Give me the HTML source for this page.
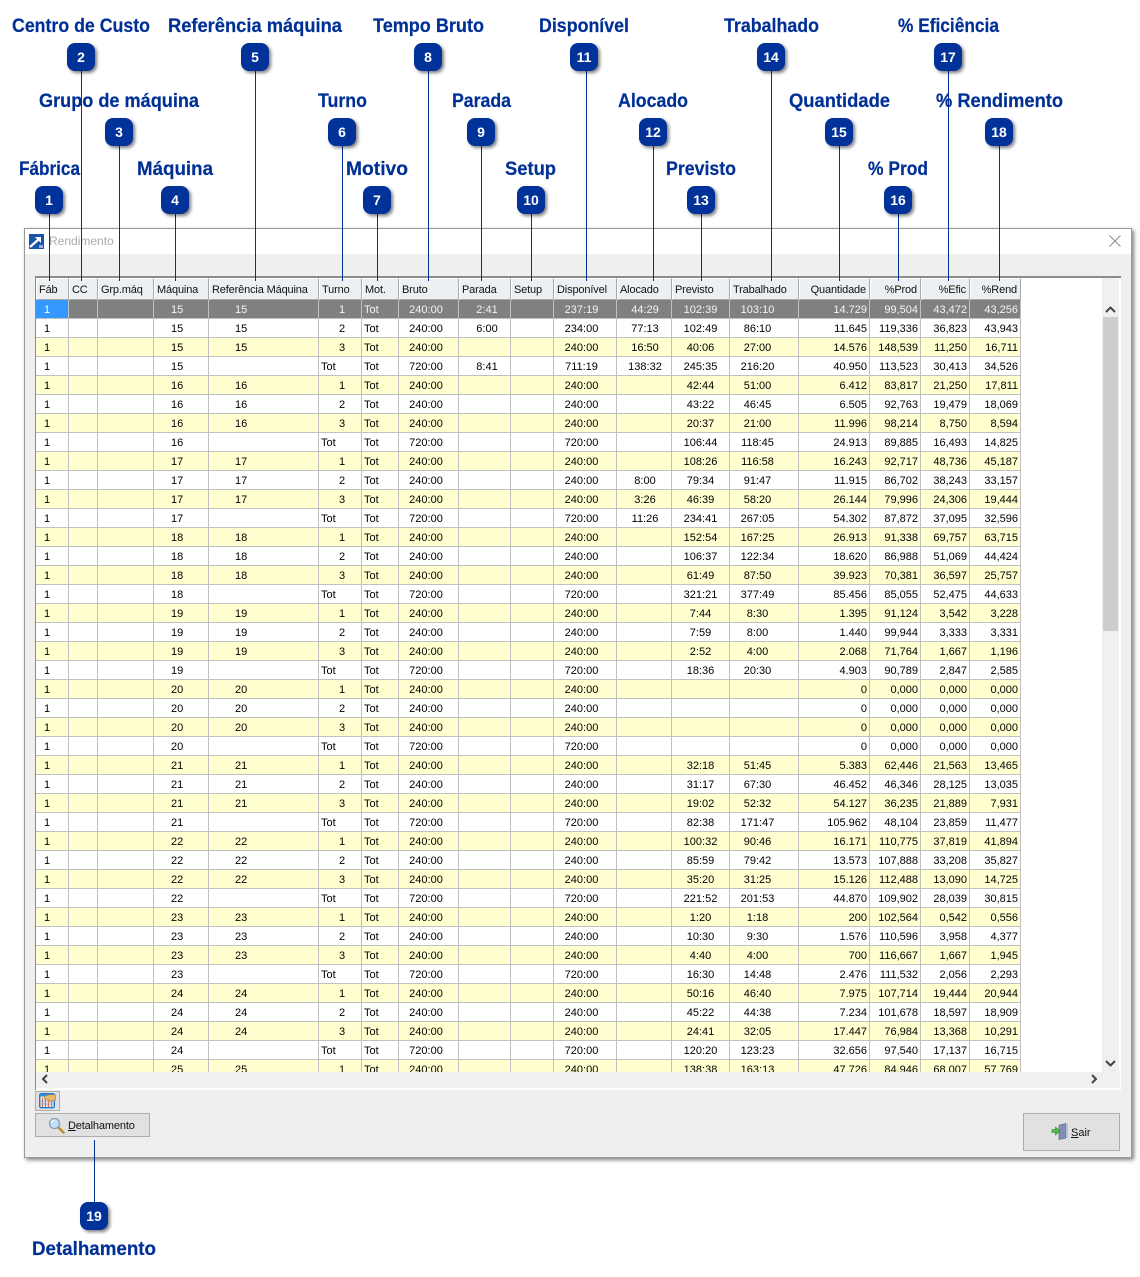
<!DOCTYPE html>
<html><head><meta charset="utf-8"><title>Rendimento</title>
<style>
html,body{margin:0;padding:0;background:#fff;width:1140px;height:1277px;overflow:hidden}
body{position:relative;font-family:"Liberation Sans",sans-serif;font-size:11px;color:#000}
div{position:absolute;box-sizing:border-box}
#dlg{left:24px;top:228px;width:1108px;height:930px;background:#efefef;border:1px solid #9a9a9a;box-shadow:2px 2px 4px #808080}
#tb{left:25px;top:229px;width:1106px;height:25px;background:#fff}
#ttl{left:49px;top:234px;color:#a9a9b0;font-size:12px;line-height:14px}
#panel{left:35px;top:276px;width:1086px;height:814px;background:#fff;border-left:1px solid #8a8a8a;border-top:2px solid #8c8c8c}
#grid{left:36px;top:278px;width:985px;height:794px;overflow:hidden}
table{border-collapse:separate;border-spacing:0;table-layout:fixed;width:985px}
th{height:22px;padding:2px 0 0 2px;font-weight:normal;text-align:left;background:#ecf0f3;border-top:1px solid #fff;border-left:1px solid #fff;border-right:1px solid #a8a8a8;border-bottom:1px solid #a8a8a8;box-sizing:border-box;white-space:nowrap;overflow:hidden;color:#111;letter-spacing:-.15px}
th.r{text-align:right;padding:2px 3px 0 0}
td{height:19px;padding:2px 0 0 0;box-sizing:border-box;border-right:1px solid #c0c0c0;border-bottom:1px solid #c0c0c0;white-space:nowrap;overflow:hidden;line-height:16px;color:#000}
tr:nth-child(odd) td{background:#ffffd0}
tr:nth-child(even) td{background:#fff}
tr.s td{background:#808080;color:#f4f4f4}
tr.s td:first-child{background:#3399ff;color:#fff}
td:nth-child(1){padding-left:8px}
td:nth-child(4){padding-left:17px}
td:nth-child(5){padding-left:26px}
td:nth-child(6){padding-left:20px}
td.t{padding-left:2px!important}
td:nth-child(7){padding-left:2px}
td:nth-child(8){text-align:center;padding-right:5px}
td:nth-child(9){text-align:center;padding-left:5px}
td:nth-child(11){text-align:center;padding-right:7px}
td:nth-child(12){text-align:center;padding-left:2px}
td:nth-child(13){text-align:center}
td:nth-child(14){text-align:center;padding-right:13px}
td:nth-child(15){text-align:right;padding-right:2px}
td:nth-child(16){text-align:right;padding-right:2px}
td:nth-child(17){text-align:right;padding-right:2px}
td:nth-child(18){text-align:right;padding-right:2px}
#hb{left:36px;top:1072px;width:1084px;height:16px;background:#f0f0f0}
#vb{left:1102px;top:278px;width:17px;height:810px;background:#f0f0f0}
#th{left:1103px;top:317px;width:15px;height:314px;background:#cdcdcd}
.btn{background:#e1e1e1;border:1px solid #adadad;color:#111}
#b0{left:35px;top:1091px;width:25px;height:20px}
#b1{left:35px;top:1113px;width:115px;height:24px}
#b2{left:1023px;top:1113px;width:97px;height:38px}
#b1 span{position:absolute;left:32px;top:5px;line-height:14px;letter-spacing:-.15px}
#b2 span{position:absolute;left:47px;top:12px;line-height:14px}
u{text-decoration:underline}
svg{position:absolute;overflow:visible}
#ov{left:0;top:0}
.l{font-family:"Liberation Sans",sans-serif;font-weight:bold;font-size:19px;fill:#003096;stroke:#003096;stroke-width:.2}
.n{font-family:"Liberation Sans",sans-serif;font-weight:bold;font-size:14px;fill:#fff;text-anchor:middle}
</style></head><body>
<div id="dlg"></div><div id="tb"></div>
<svg style="left:29px;top:234px" width="15" height="15" viewBox="0 0 15 15"><rect width="15" height="15" fill="#1a55a8"/><path d="M1 13L10 5" stroke="#fff" stroke-width="2.2"/><path d="M6 3h6v6z" fill="#fff"/><path d="M10 11h4v3h-4z" fill="#8fb4dc"/></svg>
<div id="ttl">Rendimento</div>
<svg style="left:1109px;top:235px" width="12" height="12"><path d="M.5 .5L11.5 11.5M11.5 .5L.5 11.5" stroke="#8a8a8a" stroke-width="1"/></svg>
<div id="panel"></div>
<div id="vb"></div><div id="hb"></div><div id="th"></div>
<div id="grid"><table>
<colgroup><col style="width:33px"><col style="width:29px"><col style="width:56px"><col style="width:55px"><col style="width:110px"><col style="width:43px"><col style="width:37px"><col style="width:60px"><col style="width:52px"><col style="width:43px"><col style="width:63px"><col style="width:55px"><col style="width:58px"><col style="width:69px"><col style="width:71px"><col style="width:51px"><col style="width:49px"><col style="width:51px"></colgroup>
<thead><tr><th>Fáb</th><th>CC</th><th>Grp.máq</th><th>Máquina</th><th>Referência Máquina</th><th>Turno</th><th>Mot.</th><th>Bruto</th><th>Parada</th><th>Setup</th><th>Disponível</th><th>Alocado</th><th>Previsto</th><th>Trabalhado</th><th class="r">Quantidade</th><th class="r">%Prod</th><th class="r">%Efic</th><th class="r">%Rend</th></tr></thead>
<tbody>
<tr class="s"><td>1<td><td><td>15<td>15<td>1<td>Tot<td>240:00<td>2:41<td><td>237:19<td>44:29<td>102:39<td>103:10<td>14.729<td>99,504<td>43,472<td>43,256</tr>
<tr><td>1<td><td><td>15<td>15<td>2<td>Tot<td>240:00<td>6:00<td><td>234:00<td>77:13<td>102:49<td>86:10<td>11.645<td>119,336<td>36,823<td>43,943</tr>
<tr><td>1<td><td><td>15<td>15<td>3<td>Tot<td>240:00<td><td><td>240:00<td>16:50<td>40:06<td>27:00<td>14.576<td>148,539<td>11,250<td>16,711</tr>
<tr><td>1<td><td><td>15<td><td class="t">Tot<td>Tot<td>720:00<td>8:41<td><td>711:19<td>138:32<td>245:35<td>216:20<td>40.950<td>113,523<td>30,413<td>34,526</tr>
<tr><td>1<td><td><td>16<td>16<td>1<td>Tot<td>240:00<td><td><td>240:00<td><td>42:44<td>51:00<td>6.412<td>83,817<td>21,250<td>17,811</tr>
<tr><td>1<td><td><td>16<td>16<td>2<td>Tot<td>240:00<td><td><td>240:00<td><td>43:22<td>46:45<td>6.505<td>92,763<td>19,479<td>18,069</tr>
<tr><td>1<td><td><td>16<td>16<td>3<td>Tot<td>240:00<td><td><td>240:00<td><td>20:37<td>21:00<td>11.996<td>98,214<td>8,750<td>8,594</tr>
<tr><td>1<td><td><td>16<td><td class="t">Tot<td>Tot<td>720:00<td><td><td>720:00<td><td>106:44<td>118:45<td>24.913<td>89,885<td>16,493<td>14,825</tr>
<tr><td>1<td><td><td>17<td>17<td>1<td>Tot<td>240:00<td><td><td>240:00<td><td>108:26<td>116:58<td>16.243<td>92,717<td>48,736<td>45,187</tr>
<tr><td>1<td><td><td>17<td>17<td>2<td>Tot<td>240:00<td><td><td>240:00<td>8:00<td>79:34<td>91:47<td>11.915<td>86,702<td>38,243<td>33,157</tr>
<tr><td>1<td><td><td>17<td>17<td>3<td>Tot<td>240:00<td><td><td>240:00<td>3:26<td>46:39<td>58:20<td>26.144<td>79,996<td>24,306<td>19,444</tr>
<tr><td>1<td><td><td>17<td><td class="t">Tot<td>Tot<td>720:00<td><td><td>720:00<td>11:26<td>234:41<td>267:05<td>54.302<td>87,872<td>37,095<td>32,596</tr>
<tr><td>1<td><td><td>18<td>18<td>1<td>Tot<td>240:00<td><td><td>240:00<td><td>152:54<td>167:25<td>26.913<td>91,338<td>69,757<td>63,715</tr>
<tr><td>1<td><td><td>18<td>18<td>2<td>Tot<td>240:00<td><td><td>240:00<td><td>106:37<td>122:34<td>18.620<td>86,988<td>51,069<td>44,424</tr>
<tr><td>1<td><td><td>18<td>18<td>3<td>Tot<td>240:00<td><td><td>240:00<td><td>61:49<td>87:50<td>39.923<td>70,381<td>36,597<td>25,757</tr>
<tr><td>1<td><td><td>18<td><td class="t">Tot<td>Tot<td>720:00<td><td><td>720:00<td><td>321:21<td>377:49<td>85.456<td>85,055<td>52,475<td>44,633</tr>
<tr><td>1<td><td><td>19<td>19<td>1<td>Tot<td>240:00<td><td><td>240:00<td><td>7:44<td>8:30<td>1.395<td>91,124<td>3,542<td>3,228</tr>
<tr><td>1<td><td><td>19<td>19<td>2<td>Tot<td>240:00<td><td><td>240:00<td><td>7:59<td>8:00<td>1.440<td>99,944<td>3,333<td>3,331</tr>
<tr><td>1<td><td><td>19<td>19<td>3<td>Tot<td>240:00<td><td><td>240:00<td><td>2:52<td>4:00<td>2.068<td>71,764<td>1,667<td>1,196</tr>
<tr><td>1<td><td><td>19<td><td class="t">Tot<td>Tot<td>720:00<td><td><td>720:00<td><td>18:36<td>20:30<td>4.903<td>90,789<td>2,847<td>2,585</tr>
<tr><td>1<td><td><td>20<td>20<td>1<td>Tot<td>240:00<td><td><td>240:00<td><td><td><td>0<td>0,000<td>0,000<td>0,000</tr>
<tr><td>1<td><td><td>20<td>20<td>2<td>Tot<td>240:00<td><td><td>240:00<td><td><td><td>0<td>0,000<td>0,000<td>0,000</tr>
<tr><td>1<td><td><td>20<td>20<td>3<td>Tot<td>240:00<td><td><td>240:00<td><td><td><td>0<td>0,000<td>0,000<td>0,000</tr>
<tr><td>1<td><td><td>20<td><td class="t">Tot<td>Tot<td>720:00<td><td><td>720:00<td><td><td><td>0<td>0,000<td>0,000<td>0,000</tr>
<tr><td>1<td><td><td>21<td>21<td>1<td>Tot<td>240:00<td><td><td>240:00<td><td>32:18<td>51:45<td>5.383<td>62,446<td>21,563<td>13,465</tr>
<tr><td>1<td><td><td>21<td>21<td>2<td>Tot<td>240:00<td><td><td>240:00<td><td>31:17<td>67:30<td>46.452<td>46,346<td>28,125<td>13,035</tr>
<tr><td>1<td><td><td>21<td>21<td>3<td>Tot<td>240:00<td><td><td>240:00<td><td>19:02<td>52:32<td>54.127<td>36,235<td>21,889<td>7,931</tr>
<tr><td>1<td><td><td>21<td><td class="t">Tot<td>Tot<td>720:00<td><td><td>720:00<td><td>82:38<td>171:47<td>105.962<td>48,104<td>23,859<td>11,477</tr>
<tr><td>1<td><td><td>22<td>22<td>1<td>Tot<td>240:00<td><td><td>240:00<td><td>100:32<td>90:46<td>16.171<td>110,775<td>37,819<td>41,894</tr>
<tr><td>1<td><td><td>22<td>22<td>2<td>Tot<td>240:00<td><td><td>240:00<td><td>85:59<td>79:42<td>13.573<td>107,888<td>33,208<td>35,827</tr>
<tr><td>1<td><td><td>22<td>22<td>3<td>Tot<td>240:00<td><td><td>240:00<td><td>35:20<td>31:25<td>15.126<td>112,488<td>13,090<td>14,725</tr>
<tr><td>1<td><td><td>22<td><td class="t">Tot<td>Tot<td>720:00<td><td><td>720:00<td><td>221:52<td>201:53<td>44.870<td>109,902<td>28,039<td>30,815</tr>
<tr><td>1<td><td><td>23<td>23<td>1<td>Tot<td>240:00<td><td><td>240:00<td><td>1:20<td>1:18<td>200<td>102,564<td>0,542<td>0,556</tr>
<tr><td>1<td><td><td>23<td>23<td>2<td>Tot<td>240:00<td><td><td>240:00<td><td>10:30<td>9:30<td>1.576<td>110,596<td>3,958<td>4,377</tr>
<tr><td>1<td><td><td>23<td>23<td>3<td>Tot<td>240:00<td><td><td>240:00<td><td>4:40<td>4:00<td>700<td>116,667<td>1,667<td>1,945</tr>
<tr><td>1<td><td><td>23<td><td class="t">Tot<td>Tot<td>720:00<td><td><td>720:00<td><td>16:30<td>14:48<td>2.476<td>111,532<td>2,056<td>2,293</tr>
<tr><td>1<td><td><td>24<td>24<td>1<td>Tot<td>240:00<td><td><td>240:00<td><td>50:16<td>46:40<td>7.975<td>107,714<td>19,444<td>20,944</tr>
<tr><td>1<td><td><td>24<td>24<td>2<td>Tot<td>240:00<td><td><td>240:00<td><td>45:22<td>44:38<td>7.234<td>101,678<td>18,597<td>18,909</tr>
<tr><td>1<td><td><td>24<td>24<td>3<td>Tot<td>240:00<td><td><td>240:00<td><td>24:41<td>32:05<td>17.447<td>76,984<td>13,368<td>10,291</tr>
<tr><td>1<td><td><td>24<td><td class="t">Tot<td>Tot<td>720:00<td><td><td>720:00<td><td>120:20<td>123:23<td>32.656<td>97,540<td>17,137<td>16,715</tr>
<tr><td>1<td><td><td>25<td>25<td>1<td>Tot<td>240:00<td><td><td>240:00<td><td>138:38<td>163:13<td>47.726<td>84,946<td>68,007<td>57,769</tr>
</tbody></table></div>
<svg style="left:0;top:0" width="1140" height="1277">
<path d="M1106 312l4.500-4.500 4.500 4.500M1106 1061l4.500 4.500 4.500-4.500" fill="none" stroke="#444" stroke-width="2"/>
<path d="M47 1075l-4 4 4 4M1092 1075l4 4-4 4" fill="none" stroke="#444" stroke-width="2"/>
</svg>
<div id="b0" class="btn"></div>
<svg style="left:39px;top:1093px" width="18" height="16" viewBox="0 0 18 16"><rect x=".7" y=".7" width="14.600" height="14" rx="1.5" fill="#f6e4d4" stroke="#1a7bd8" stroke-width="1.400"/><path d="M1 1h14v2.500H1z" fill="#2a8fe0"/><path d="M3.500 5v9M6.500 5v9M9.500 5v9M12.500 5v9" stroke="#d86a4a"/><path d="M2 8h12M2 11h12" stroke="#8aa8d8"/><path d="M5 5l1-2 5-1.500 5.500 .5V7l-5 1.500-2.500-2-3-.5z" fill="#e8b868" stroke="#a87830" stroke-width=".6"/></svg>
<div id="b1" class="btn"><span><u>D</u>etalhamento</span></div>
<svg style="left:48px;top:1117px" width="17" height="17" viewBox="0 0 17 17"><path d="M10 10l5.500 5.500" stroke="#c88a30" stroke-width="2.600" stroke-linecap="round"/><circle cx="6.500" cy="6.500" r="5" fill="#bfe2f8" stroke="#8c9cb0" stroke-width="1.300"/><path d="M3.500 6a3 3 0 0 1 3-3" stroke="#fff" stroke-width="1.200" fill="none"/></svg>
<div id="b2" class="btn"><span><u>S</u>air</span></div>
<svg style="left:1052px;top:1123px" width="17" height="17" viewBox="0 0 17 17"><path d="M7 2l7-1.500V15l-7 1.500z" fill="#7f8fb8" stroke="#55607f" stroke-width=".6"/><path d="M14 1h2v14h-2z" fill="#b8c0d8"/><path d="M0 6.500h3.500V4L8 8l-4.500 4V9.500H0z" fill="#4fc040" stroke="#2a8a20" stroke-width=".6"/></svg>

<svg id="ov" width="1140" height="1277" style="left:0;top:0">
<defs><filter id="sh" x="-30%" y="-30%" width="170%" height="170%"><feDropShadow dx="2" dy="2" stdDeviation="1.500" flood-color="#000" flood-opacity=".5"/></filter></defs>
<g stroke="#00309a" stroke-width="1" fill="none">
<path d="M49.500 214V281M81.500 71V281M119.500 146V281M175.500 214V281M255.500 71V281M342.500 146V281M377.500 214V281M428.500 71V281M481.500 146V281M531.500 214V281M586.500 71V281M653.500 146V281M701.500 214V281M771.500 71V281M839.500 146V281M898.500 214V281M948.500 71V281M999.500 146V281M94.500 1140V1202"/>
</g>
<g fill="#00309a" filter="url(#sh)">
<rect x="35" y="186" width="28" height="28" rx="8"/><rect x="67" y="43" width="28" height="28" rx="8"/><rect x="105" y="118" width="28" height="28" rx="8"/><rect x="161" y="186" width="28" height="28" rx="8"/><rect x="241" y="43" width="28" height="28" rx="8"/><rect x="328" y="118" width="28" height="28" rx="8"/><rect x="363" y="186" width="28" height="28" rx="8"/><rect x="414" y="43" width="28" height="28" rx="8"/><rect x="467" y="118" width="28" height="28" rx="8"/><rect x="517" y="186" width="28" height="28" rx="8"/><rect x="570" y="43" width="28" height="28" rx="8"/><rect x="639" y="118" width="28" height="28" rx="8"/><rect x="687" y="186" width="28" height="28" rx="8"/><rect x="757" y="43" width="28" height="28" rx="8"/><rect x="825" y="118" width="28" height="28" rx="8"/><rect x="884" y="186" width="28" height="28" rx="8"/><rect x="934" y="43" width="28" height="28" rx="8"/><rect x="985" y="118" width="28" height="28" rx="8"/><rect x="80" y="1202" width="28" height="28" rx="8"/>
</g>
<g>
<text class="n" x="49" y="205">1</text><text class="n" x="81" y="62">2</text><text class="n" x="119" y="137">3</text><text class="n" x="175" y="205">4</text><text class="n" x="255" y="62">5</text><text class="n" x="342" y="137">6</text><text class="n" x="377" y="205">7</text><text class="n" x="428" y="62">8</text><text class="n" x="481" y="137">9</text><text class="n" x="531" y="205">10</text><text class="n" x="584" y="62">11</text><text class="n" x="653" y="137">12</text><text class="n" x="701" y="205">13</text><text class="n" x="771" y="62">14</text><text class="n" x="839" y="137">15</text><text class="n" x="898" y="205">16</text><text class="n" x="948" y="62">17</text><text class="n" x="999" y="137">18</text><text class="n" x="94" y="1221">19</text>
</g>
<text class="l" x="19" y="175" textLength="61" lengthAdjust="spacingAndGlyphs">Fábrica</text>
<text class="l" x="12" y="32" textLength="138" lengthAdjust="spacingAndGlyphs">Centro de Custo</text>
<text class="l" x="39" y="107" textLength="160" lengthAdjust="spacingAndGlyphs">Grupo de máquina</text>
<text class="l" x="137" y="175" textLength="76" lengthAdjust="spacingAndGlyphs">Máquina</text>
<text class="l" x="168" y="32" textLength="174" lengthAdjust="spacingAndGlyphs">Referência máquina</text>
<text class="l" x="318" y="107" textLength="49" lengthAdjust="spacingAndGlyphs">Turno</text>
<text class="l" x="346" y="175" textLength="62" lengthAdjust="spacingAndGlyphs">Motivo</text>
<text class="l" x="373" y="32" textLength="111" lengthAdjust="spacingAndGlyphs">Tempo Bruto</text>
<text class="l" x="452" y="107" textLength="59" lengthAdjust="spacingAndGlyphs">Parada</text>
<text class="l" x="505" y="175" textLength="51" lengthAdjust="spacingAndGlyphs">Setup</text>
<text class="l" x="539" y="32" textLength="90" lengthAdjust="spacingAndGlyphs">Disponível</text>
<text class="l" x="618" y="107" textLength="70" lengthAdjust="spacingAndGlyphs">Alocado</text>
<text class="l" x="666" y="175" textLength="70" lengthAdjust="spacingAndGlyphs">Previsto</text>
<text class="l" x="724" y="32" textLength="95" lengthAdjust="spacingAndGlyphs">Trabalhado</text>
<text class="l" x="789" y="107" textLength="101" lengthAdjust="spacingAndGlyphs">Quantidade</text>
<text class="l" x="868" y="175" textLength="60" lengthAdjust="spacingAndGlyphs">% Prod</text>
<text class="l" x="898" y="32" textLength="101" lengthAdjust="spacingAndGlyphs">% Eficiência</text>
<text class="l" x="936" y="107" textLength="127" lengthAdjust="spacingAndGlyphs">% Rendimento</text>
<text class="l" x="32" y="1255" textLength="124" lengthAdjust="spacingAndGlyphs">Detalhamento</text>
</svg>
</body></html>
